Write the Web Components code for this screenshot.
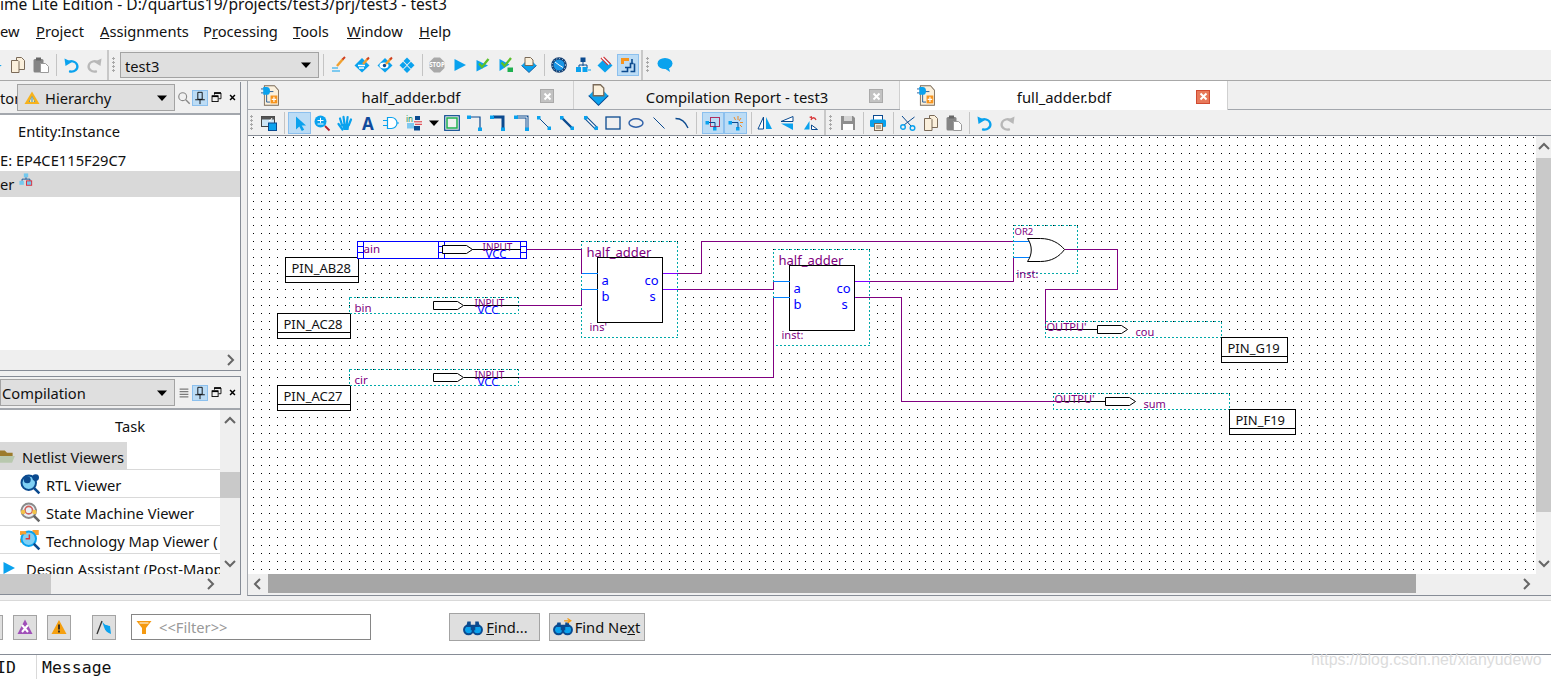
<!DOCTYPE html>
<html>
<head>
<meta charset="utf-8">
<title>Quartus</title>
<style>
    html, body { margin: 0; padding: 0; overflow: hidden; background: #fff; }
    body { font: 14.7px "Noto Sans", "Open Sans", sans-serif; color: #111; width: 1551px; height: 679px; }
</style>
</head>
<body>
<q-app>
    <q-title slot="title">ime Lite Edition - D:/quartus19/projects/test3/prj/test3 - test3</q-title>
    <q-menubar slot="menu">
        <q-menu w="36">ew</q-menu>
        <q-menu w="64"><u>P</u>roject</q-menu>
        <q-menu w="103"><u>A</u>ssignments</q-menu>
        <q-menu w="90">P<u>r</u>ocessing</q-menu>
        <q-menu w="54"><u>T</u>ools</q-menu>
        <q-menu w="72"><u>W</u>indow</q-menu>
        <q-menu w="50"><u>H</u>elp</q-menu>
    </q-menubar>
    <q-toolbar slot="tools" h="30">
        <q-tool w="7" icon="tick" s="7"></q-tool>
        <q-tool w="22" icon="copy"></q-tool>
        <q-tool w="23" icon="paste"></q-tool>
        <q-sep w="9"></q-sep>
        <q-tool w="21" icon="undo"></q-tool>
        <q-tool w="23" icon="redo"></q-tool>
        <q-grip w="15"></q-grip>
        <q-combo w="199" h="26">test3</q-combo>
        <q-sep w="8"></q-sep>
        <q-tool w="24" icon="pencil"></q-tool>
        <q-tool w="21" icon="dia-edit"></q-tool>
        <q-tool w="26" icon="dia-eye"></q-tool>
        <q-tool w="18" icon="dia-split"></q-tool>
        <q-sep w="12"></q-sep>
        <q-tool w="18" icon="stop"></q-tool>
        <q-tool w="27" icon="play"></q-tool>
        <q-tool w="20" icon="check"></q-tool>
        <q-tool w="26" icon="check-chip"></q-tool>
        <q-tool w="20" icon="dia-doc"></q-tool>
        <q-sep w="10"></q-sep>
        <q-tool w="20" icon="clock"></q-tool>
        <q-tool w="27" icon="hier"></q-tool>
        <q-tool w="18" icon="dia-red"></q-tool>
        <q-gap w="3"></q-gap>
        <q-tool w="22" icon="chip" active></q-tool>
        <q-grip w="16"></q-grip>
        <q-tool w="20" icon="bubble"></q-tool>
    </q-toolbar>

    <q-dock slot="left" title="tor" combo="Hierarchy" icon="hier-tri" tool="search" h="289">
        <q-panel>
            <q-row h="32" x="18">Entity:Instance</q-row>
            <q-row h="22" x="0" style="padding-top:2px">E: EP4CE115F29C7</q-row>
            <q-row h="26" x="0" selected>er&nbsp;<q-icon name="tree" s="14" style="align-self:flex-start;margin:2px 0 0 1px"></q-icon></q-row>
        </q-panel>
        <q-scroll slot="hbar" orient="h" arrows="end"></q-scroll>
    </q-dock>
    <q-gap slot="left" style="height:5px"></q-gap>
    <q-dock slot="left" title="" combo="Compilation" tool="lines" h="219" top>
        <q-task-list></q-task-list>
        <q-scroll slot="hbar" orient="h" arrows="end" thumb="51" offset="0" style="margin-right:20px"></q-scroll>
    </q-dock>

    <q-tabs slot="right">
        <q-tab icon="doc-chip" s="18" sh="21" pad="13" cm="19">half_adder.bdf</q-tab>
        <q-tab icon="dia-doc" s="21" sh="22" pad="14" cm="16" w="326">Compilation Report - test3</q-tab>
        <q-tab icon="doc-chip" s="18" sh="21" pad="17" cm="17" close="red" w="328" active>full_adder.bdf</q-tab>
    </q-tabs>
    <q-toolbar slot="right" h="25" flat>
        <q-grip w="10" plain></q-grip>
        <q-tool w="22" icon="win"></q-tool>
        <q-sep w="8"></q-sep>
        <q-tool w="23" icon="select" active></q-tool>
        <q-tool w="22" icon="zoom"></q-tool>
        <q-tool w="24" icon="hand"></q-tool>
        <q-tool w="22" icon="letter"></q-tool>
        <q-tool w="24" icon="gate"></q-tool>
        <q-tool w="22" icon="in"></q-tool>
        <q-tool w="17" icon="tri"></q-tool>
        <q-tool w="20" icon="rect-green"></q-tool>
        <q-tool w="26" icon="corner1"></q-tool>
        <q-tool w="20" icon="corner2"></q-tool>
        <q-tool w="28" icon="corner3"></q-tool>
        <q-tool w="16" icon="diag1"></q-tool>
        <q-tool w="30" icon="diag2"></q-tool>
        <q-tool w="17" icon="diag3"></q-tool>
        <q-tool w="28" icon="rect"></q-tool>
        <q-tool w="17" icon="ellipse"></q-tool>
        <q-tool w="29" icon="line"></q-tool>
        <q-tool w="17" icon="arc"></q-tool>
        <q-sep w="12"></q-sep>
        <q-tool w="22" icon="snap1" active></q-tool>
        <q-tool w="23" icon="snap2" active></q-tool>
        <q-sep w="8"></q-sep>
        <q-tool w="20" icon="flip-h"></q-tool>
        <q-tool w="25" icon="flip-v"></q-tool>
        <q-tool w="21" icon="rotate"></q-tool>
        <q-grip w="17" inset></q-grip>
        <q-tool w="20" icon="save"></q-tool>
        <q-sep w="10"></q-sep>
        <q-tool w="20" icon="print"></q-tool>
        <q-sep w="10"></q-sep>
        <q-tool w="19" icon="scissors"></q-tool>
        <q-tool w="28" icon="copy"></q-tool>
        <q-tool w="18" icon="paste"></q-tool>
        <q-sep w="12"></q-sep>
        <q-tool w="19" icon="undo"></q-tool>
        <q-tool w="26" icon="redo"></q-tool>
    </q-toolbar>
    <q-editor slot="right">
        <q-schematic></q-schematic>
        <q-scroll slot="vbar" orient="v" thumb="354" offset="0" arrows="both" w="15"></q-scroll>
        <q-scroll slot="hbar" orient="h" thumb="1148" offset="0" arrows="both" dark></q-scroll>
    </q-editor>

    <q-messages slot="bottom"></q-messages>
    <q-mark slot="mark">https://blog.csdn.net/xianyudewo</q-mark>
</q-app>

<script>
const BLUE = '#0aa2ee'
const NAVY = '#0b4a8f'
const CREAM = '#fbf0dc'
const BROWN = '#7a6a58'
const ROUND = 'fill="none" stroke-linecap="round"'
const base = `<path d="M8 1l7.5 7.5L8 15.5.5 8.5z" fill="${BLUE}"/>`
const lens = (c) => `<circle cx="7" cy="7" r="5.8" fill="#7fd0f5" stroke="${c}" stroke-width="1.6"/><path d="M11 11l4.500 4.500" stroke="${NAVY}" stroke-width="2"/>`
const pencil = `<path d="M9 7l5-5.500" stroke="#f0a030" stroke-width="2.500"/><path d="M13 2.500l2-2" stroke="#d04020" stroke-width="2"/>`
const ends = `<rect x="1" y="1" width="3.500" height="3.500" fill="${BLUE}"/><rect x="11.500" y="11.500" width="3.500" height="3.500" fill="${BLUE}"/>`
const corner = (inner) => `<path d="M3 2h10v11" fill="none" stroke="${NAVY}" stroke-width="${inner ? 3 : 1.200}"/>${inner === 2 ? '<path d="M3 2h10v11" fill="none" stroke="#fff"/>' : ''}<rect y=".5" width="4" height="3.500" fill="${BLUE}"/><rect x="11" y="12.500" width="4" height="3.500" fill="${BLUE}"/>`

// toolbar and tree icons, all drawn on a 16 x 16 box
const ICONS = {
    'tick': `<path d="M0 7h4l-4 3z" fill="${BLUE}"/>`,
    'copy': `<path d="M6.500 .5h5l3 3v9h-8z" fill="${CREAM}" stroke="${BROWN}"/><path d="M1.500 3.500h6.500l1 1v11h-7.500z" fill="${CREAM}" stroke="${BROWN}"/>`,
    'paste': `<rect x=".5" y="2" width="10" height="13.500" rx="1.500" fill="#858585"/><rect x="3" y=".5" width="5" height="3" fill="#666"/><path d="M7.500 6.500h5l3 3v6h-8z" fill="#fff" stroke="#9a9a9a"/>`,
    'undo': `<path d="M3.500 5.500a6 5.200 0 1 1 2.500 9" ${ROUND} stroke="${BLUE}" stroke-width="2.300"/><path d="M.5 1.500l1 7.500 6.500-4z" fill="${BLUE}"/>`,
    'redo': `<path d="M12.500 5.500a6 5.200 0 1 0-2.500 9" ${ROUND} stroke="#b8b8b8" stroke-width="2.300"/><path d="M15.500 1.500l-1 7.500-6.500-4z" fill="#b8b8b8"/>`,
    'pencil': `<path d="M1 11h6M1 14h8" stroke="${BLUE}" stroke-width="1.200"/><path d="M6 9l6-7" stroke="#f0a030" stroke-width="2.500"/><path d="M11.500 2.500L14 0" stroke="#d04020" stroke-width="2"/>`,
    'dia-edit': `${base}<path d="M4 8.500h7M5 11h5" stroke="#fff" stroke-width="1.300"/>${pencil}`,
    'dia-eye': `${base}<ellipse cx="7" cy="8.500" rx="4.500" ry="3" fill="#fff"/><circle cx="7.500" cy="8.500" r="1.700" fill="${NAVY}"/>${pencil}`,
    'dia-split': `<g fill="${BLUE}"><path d="M8 .5L11.500 4 8 7.500 4.500 4z"/><path d="M4 4.800L7.500 8.300 4 11.800.5 8.300z"/><path d="M12 4.800l3.500 3.500L12 11.800 8.500 8.300z"/><path d="M8 9L11.500 12.500 8 16 4.500 12.500z"/></g>`,
    'stop': `<path d="M5 .5h6L15.500 5v6L11 15.500H5L.5 11V5z" fill="#a9a9a9"/><text x="8" y="10.300" text-anchor="middle" font-size="6.200" font-weight="700" fill="#fff" font-family="Noto Sans">STOP</text>`,
    'play': `<path d="M2.500 2l11.500 6-11.500 6z" fill="${BLUE}"/>`,
    'check': `<path d="M1.500 3l11.500 5.500-11.500 6z" fill="${BLUE}"/><path d="M4 6.500l3 3.500 6.500-8" fill="none" stroke="#5cc02c" stroke-width="2.300"/>`,
    'check-chip': `<path d="M1.500 2l10 5.500-10 6.500z" fill="${BLUE}"/><path d="M3.500 5.500l3 3.500 6.500-8" fill="none" stroke="#5cc02c" stroke-width="2.300"/><rect x="9.500" y="10.500" width="5.500" height="4.500" fill="#1eb050"/>`,
    'dia-doc': `<path d="M.5 8.500L4 5v3.500h8V5l3.500 3.500L8 15.500z" fill="${BLUE}"/><path d="M.5 8.500L8 15.500 15.500 8.500" fill="none" stroke="${NAVY}" stroke-width=".8"/><path d="M4 .5h5.500l2.500 2.500v5.500H4z" fill="${CREAM}" stroke="${BROWN}"/>`,
    'clock': `<circle cx="8" cy="8" r="7.800" fill="#123f73"/><circle cx="8" cy="8" r="6.500" fill="none" stroke="#fff" stroke-width=".8" stroke-dasharray="1 2"/><circle cx="8" cy="8" r="5.500" fill="#1a96e6"/><path d="M8 8L4 5M8 8l4 2.500" stroke="#fff"/>`,
    'hier': `<rect x="5.500" y=".5" width="5" height="4.500" fill="${NAVY}"/><path d="M8 5v4M4 11V8h8v3" fill="none" stroke="${NAVY}"/><rect x="1" y="10" width="5" height="5" fill="${BLUE}"/><rect x="7.500" y="10" width="5" height="5" fill="${BLUE}"/><path d="M13 13h3" stroke="${BLUE}"/>`,
    'dia-red': `${base}<path d="M4 1l7 7M6.500 0l7 7" stroke="#d8383a" stroke-width="1.400"/><path d="M5.200 .5l7 7" stroke="#fff" stroke-width="1.200"/>`,
    'chip': `<path d="M1 1h8v3H4v3H1z" fill="#f7941d"/><path d="M1.500 14.500h6v-4h3v-4h3M5 10.500h2.500M12 2v4.500M14.500 6.500v8h-4" fill="none" stroke="${NAVY}" stroke-width="1.600"/>`,
    'bubble': `<ellipse cx="8" cy="6.500" rx="7.500" ry="5.500" fill="${BLUE}"/><path d="M7 11l6 4-1.500-6z" fill="${BLUE}"/>`,
    'win': `<rect x=".5" y="1.500" width="13" height="10" fill="#cfe6f5" stroke="#444"/><rect x=".5" y="1.500" width="13" height="3" fill="#555"/><path d="M8 5.500h1.500L11 3" stroke="#fff" fill="none"/><rect x="7.500" y="8" width="8" height="7.500" fill="${BLUE}" stroke="${NAVY}"/>`,
    'select': `<path d="M4 1.500v13l3.300-3 2.500 4.500 2.400-1.200-2.500-4.300h4.300z" fill="${BLUE}"/>`,
    'zoom': `<circle cx="6.500" cy="6.500" r="6" fill="${BLUE}"/><path d="M3.500 5.500h6M6.500 2.800v5M3.500 9h6" stroke="#fff"/><path d="M11 11l4.500 4.500" stroke="#b02030" stroke-width="1.800"/>`,
    'hand': `<path d="M5.500 14.500L1.500 9M5 10L3 3.500M7.500 9L6.500 1.800M9.800 9l.8-7M11.800 10l2.200-5.500" ${ROUND} stroke="${BLUE}" stroke-width="2.200"/><path d="M4.500 9h8l-1 6h-5z" fill="${BLUE}"/>`,
    'letter': `<text x="8" y="14.500" text-anchor="middle" font-size="17" font-weight="700" fill="#0f4a9c" font-family="Noto Sans">A</text>`,
    'gate': `<path d="M4.500 2.500h4a5.500 5.500 0 0 1 0 11h-4z" fill="#fff" stroke="${BLUE}" stroke-width="1.200"/><path d="M0 5.500h4.500M0 10.500h4.500M14 8h2" stroke="${BLUE}" stroke-width="1.200"/>`,
    'in': `<text x="0" y="6.500" font-size="8" fill="#128a50" font-family="Noto Sans">in</text><rect x="9" y="1" width="5" height="4" fill="${NAVY}"/><rect x="8" y="11" width="6" height="4.500" fill="${NAVY}"/><path d="M8 6.800h8M9 9.300h7" stroke="#e0303a"/><rect x="1" y="8" width="7" height="5.500" fill="#7fc8f0"/>`,
    'tri': `<path d="M3 5.500h10L8 11z" fill="#000"/>`,
    'rect-green': `<rect x=".7" y=".7" width="14.600" height="14.600" fill="none" stroke="${NAVY}" stroke-width="1.200"/><rect x="3" y="3" width="10" height="10" fill="none" stroke="#1eb050" stroke-width="1.500"/>`,
    'corner1': corner(0),
    'corner2': corner(1),
    'corner3': corner(2),
    'diag1': `<path d="M2 2l12 12" stroke="${NAVY}"/>${ends}`,
    'diag2': `<path d="M2 2l12 12" stroke="${NAVY}" stroke-width="2.400"/>${ends}`,
    'diag3': `<path d="M2 2l12 12" stroke="${NAVY}" stroke-width="3.600"/><path d="M2 2l12 12" stroke="#fff" stroke-width="1.400"/>${ends}`,
    'rect': `<rect x="1" y="2" width="14" height="12" fill="none" stroke="${NAVY}" stroke-width="1.300"/>`,
    'ellipse': `<ellipse cx="8" cy="8" rx="7" ry="4.200" fill="none" stroke="#2d5fa8" stroke-width="1.400"/>`,
    'line': `<path d="M2.500 2.500l11 11" stroke="${NAVY}"/>`,
    'arc': `<path d="M1.500 3.500c6 0 10 3.500 12.500 9.500" fill="none" stroke="${NAVY}" stroke-width="1.300"/>`,
    'snap1': `<rect x="5.500" y="2.500" width="9" height="9" fill="none" stroke="#b03060"/><rect x=".5" y="6" width="3.500" height="3.500" fill="${BLUE}"/><rect x="8" y="12" width="3.500" height="3.500" fill="${BLUE}"/><path d="M4 7.500h6v5" stroke="${NAVY}" fill="none"/>`,
    'snap2': `<rect x=".5" y="6" width="3.500" height="3.500" fill="${BLUE}"/><rect x="8" y="12" width="3.500" height="3.500" fill="${BLUE}"/><path d="M4 7.500h6v5" stroke="${NAVY}" fill="none"/><path d="M10 1v4M13 3l-2 3M15 7.500h-3M14 12l-2-2M6 2l1.500 3" stroke="#f08a24"/>`,
    'flip-h': `<path d="M6.500 2v12H1z" fill="#fff" stroke="${NAVY}"/><path d="M9 2v12h6z" fill="${BLUE}"/>`,
    'flip-v': `<path d="M13 1.500v5H1z" fill="#fff" stroke="${NAVY}"/><path d="M13 8.500v6.500L1 8.500z" fill="${BLUE}"/>`,
    'rotate': `<path d="M1 14.500L6.500 6v8.500z" fill="${BLUE}"/><path d="M8.500 10l6 4.500h-6z" fill="#fff" stroke="${NAVY}"/><path d="M8 5c1-3 4-3 5 0" fill="none" stroke="#d8383a" stroke-width="1.300"/><path d="M6 2l3-1 0 3z" fill="#d8383a"/>`,
    'save': `<path d="M1 1h12l2 2v12H1z" fill="#8e8e8e"/><rect x="4" y="1" width="8" height="5" fill="#d4d4d4"/><rect x="3" y="9" width="10" height="6" fill="#fff"/>`,
    'print': `<rect x="3.500" y=".5" width="9" height="5" fill="#fff" stroke="${NAVY}"/><rect x="0" y="4.500" width="16" height="7.500" rx="1.500" fill="${BLUE}"/><rect x="4.500" y="8.500" width="8" height="7" fill="${CREAM}" stroke="${BROWN}"/><path d="M6 11h5M6 13h5" stroke="${BROWN}"/>`,
    'scissors': `<path d="M2 1l9 10M14.500 2L4 10" fill="none" stroke="${NAVY}"/><circle cx="3" cy="12" r="2.300" fill="none" stroke="${BLUE}" stroke-width="1.400"/><circle cx="12.500" cy="13" r="2.300" fill="none" stroke="${BLUE}" stroke-width="1.400"/>`,
    'doc-chip': `<path d="M3 .5h9l3.500 3.500v11.500H3z" fill="${CREAM}" stroke="${BROWN}" stroke-width=".8"/><path d="M0 3h3M0 6h3M6 5h5M5 7v6h3" stroke="${NAVY}" stroke-width=".7" fill="none"/><path d="M2 1.500h3a3 3 0 0 1 0 6H2z" fill="${BLUE}"/><rect x="8.500" y="8" width="6" height="6" fill="#f7941d"/><path d="M11.500 9v4M9.500 11h4" stroke="#fff"/>`,
    'hier-tri': `<path d="M8 1.500L15.500 14H.5z" fill="#f6b21c"/><path d="M8 6l3 6H5z" fill="#2a8fe0"/><path d="M6.500 12V9.500M8 12V7.500M9.500 12V9.500" stroke="#fde9a0"/>`,
    'tree': `<rect x="5.500" y=".5" width="5" height="4.500" fill="#72c8ee"/><path d="M8 5v2M3.500 9V7h9v2" fill="none" stroke="${NAVY}"/><rect x=".5" y="9" width="5" height="4.500" fill="#72c8ee"/><rect x="8.500" y="9" width="6" height="5" fill="#72c8ee" stroke="#e02030"/>`,
    'search': `<circle cx="6.500" cy="6.500" r="4.500" fill="none" stroke="#888" stroke-width="1.300"/><path d="M10 10l4.500 4.500" stroke="#888" stroke-width="1.600"/>`,
    'lines': `<path d="M3 3.500h10M3 6.500h10M3 9.500h10M3 12.500h10" stroke="#7a7a7a" stroke-width="1.300"/>`,
    'pin': `<path d="M5.500 1.500h5v8h-5zM2.500 10h11M8 10v5" fill="none" stroke="#000"/>`,
    'restore': `<path d="M5.500 2.500h8v7h-3M5.500 2.500v2" fill="none" stroke="#000" stroke-width="1.100"/><path d="M5 2.500h8.500" stroke="#000" stroke-width="2"/><rect x="2.500" y="6" width="7.500" height="7" fill="none" stroke="#000" stroke-width="1.100"/><path d="M2.500 6.500H10" stroke="#000" stroke-width="2"/>`,
    'close': `<path d="M5 5l6 6M11 5l-6 6" stroke="#000" stroke-width="1.800"/>`,
    'folder': `<path d="M0 3h6l2 2h5v3H0z" fill="#9c7c2c"/><path d="M2 8h13l-2.500 6H0z" fill="#b8c8ae"/>`,
    'rtl': `${lens(NAVY)}<circle cx="12.500" cy="2.800" r="2.700" fill="${NAVY}"/><circle cx="5.800" cy="4.500" r="2.800" fill="${NAVY}"/>`,
    'state': `<circle cx="7" cy="7" r="5.800" fill="#e8f0f5" stroke="#8a8a8a" stroke-width="1.600"/><circle cx="7" cy="6.500" r="3" fill="none" stroke="#d0605a" stroke-width="1.300"/><circle cx="2.500" cy="8" r="1.800" fill="#f2c44a"/><circle cx="11.500" cy="8" r="1.800" fill="#f2c44a"/><path d="M11 11l4.500 4.500" stroke="#666" stroke-width="2"/>`,
    'tech': `<path d="M0 1h5v3H0zM10 0h5v4h-5zM0 7h3v3H0z" fill="#f7a030"/>${lens(BLUE)}<path d="M4.500 7h3V3.500" fill="none" stroke="#d8383a" stroke-width="1.200"/><path d="M0 1h5v2.500H0z" fill="#f7a030"/>`,
    'err': `<path d="M8 .5l7.500 14.500H.5z" fill="#a050b8"/><path d="M5 6l6 7M11 6l-6 7" stroke="#fff" stroke-width="2"/>`,
    'warn': `<path d="M8 1l7.500 14H.5z" fill="#f5a010"/><path d="M8 5.500v5M8 11.500v2" stroke="#222" stroke-width="1.700"/>`,
    'flag': `<path d="M1 15L6 2" stroke="#333" stroke-width="1.300"/><path d="M6 2c2 4 4 4 8 5l1 8c-3-1-6-3-7-7z" fill="${BLUE}"/>`,
    'funnel': `<path d="M.5 2h15L10 9v6H6V9z" fill="#f59a10"/><path d="M3.500 4h9" stroke="#fff"/>`,
    'find': `<circle cx="4" cy="10.500" r="4" fill="${BLUE}" stroke="${NAVY}" stroke-width="1.700"/><circle cx="12" cy="10.500" r="4" fill="${BLUE}" stroke="${NAVY}" stroke-width="1.700"/><path d="M2 8l1-5h3v5M14 8l-1-5h-3v5" fill="${NAVY}"/><rect x="6" y="6" width="4" height="5" fill="${NAVY}"/>`,
    'find-next': `<circle cx="4" cy="10.500" r="4" fill="${BLUE}" stroke="${NAVY}" stroke-width="1.700"/><circle cx="12" cy="10.500" r="4" fill="${BLUE}" stroke="${NAVY}" stroke-width="1.700"/><path d="M2 8l1-4h3v4M14 8l-1-4h-3v4" fill="${NAVY}"/><rect x="6" y="6" width="4" height="5" fill="${NAVY}"/><path d="M9 2.500h5M12 .5l3 2-3 2" fill="none" stroke="#f59a10"/>`
}

class QElement extends HTMLElement {
    constructor(){
        super()
        this.attachShadow({mode: 'open'})
    }
    getStyles(){ return ':host { display: block; }' }
    getTemplate(){ return '<slot></slot>' }
    render(){
        this.shadowRoot.innerHTML = `<style>${this.getStyles()}</style>${this.getTemplate()}`
    }
    connectedCallback(){
        const w = this.getAttribute('w')
        if (w) this.style.width = w + 'px'
        this.render()
    }
}

class QIcon extends QElement {
    getStyles(){
        return `:host { display: inline-flex; flex: none; } svg { display: block; overflow: visible; }`
    }
    getTemplate(){
        const s = this.getAttribute('s') || 16
        const h = this.getAttribute('sh') || s
        return `<svg width="${s}" height="${h}" viewBox="0 0 16 16" preserveAspectRatio="none">${ICONS[this.getAttribute('name')]}</svg>`
    }
}

class QApp extends QElement {
    getStyles(){
        return `
            :host { display: grid; width: 1551px; height: 679px; overflow: hidden; position: relative;
                grid-template-rows: 14px 36px 31px 519px 79px; background: #fff; }
            .main { display: flex; background: #f0f0f0; }
            .left { width: 241px; flex: none; padding-top: 1px; display: flex; flex-direction: column; box-sizing: border-box; }
            .right { margin-left: 6px; flex: 1; min-width: 0; height: 514px; display: flex; flex-direction: column;
                border-left: 1px solid #a3a7ad; border-bottom: 1px solid #868c96; }
            .mark { position: absolute; left: 1311px; top: 651px; }
        `
    }
    getTemplate(){
        return `
            <slot name="title"></slot>
            <slot name="menu"></slot>
            <slot name="tools"></slot>
            <div class="main">
                <div class="left"><slot name="left"></slot></div>
                <div class="right"><slot name="right"></slot></div>
            </div>
            <slot name="bottom"></slot>
            <div class="mark"><slot name="mark"></slot></div>
        `
    }
}

class QTitle extends QElement {
    getStyles(){
        return `:host { overflow: hidden; height: 14px; white-space: nowrap; background: #fff; font-size: 15.6px; }
            span { display: block; margin-top: -3px; line-height: 14px; }`
    }
    getTemplate(){ return '<span><slot></slot></span>' }
}

class QMenubar extends QElement {
    getStyles(){ return `:host { display: flex; height: 34px; padding-bottom: 2px; align-items: center; background: #fff; }` }
}

class QMenu extends QElement {
    getStyles(){ return `:host { display: block; white-space: nowrap; flex: none; }` }
}

class QToolbar extends QElement {
    getStyles(){
        const h = this.getAttribute('h')
        return `:host { display: flex; align-items: center; height: ${h}px; box-sizing: content-box; background: #f0f0f0; overflow: hidden;
            ${this.hasAttribute('flat') ? '' : 'border-bottom: 1px solid #a8a8a8;'} }`
    }
}

class QTool extends QElement {
    getStyles(){
        return `:host { display: flex; flex: none; height: 22px; align-items: center; justify-content: center; box-sizing: border-box; }
            :host([active]) { background: #bcdcf5; border: 1px solid #8cc0ee; }`
    }
    getTemplate(){ return `<q-icon name="${this.getAttribute('icon')}" s="${this.getAttribute('s') || 16}"></q-icon>` }
}

class QGap extends QElement {
    getStyles(){ return `:host { display: block; flex: none; }` }
    getTemplate(){ return '' }
}

class QSep extends QElement {
    getStyles(){
        return `:host { display: flex; flex: none; height: 22px; justify-content: center; }
            i { width: 1px; background: #c4c4c4; }`
    }
    getTemplate(){ return '<i></i>' }
}

// toolbar divider with its dotted handle
class QGrip extends QElement {
    getStyles(){
        const plain = this.hasAttribute('plain')
        const inset = this.hasAttribute('inset')
        return `:host { display: flex; flex: none; height: 100%; align-self: stretch; align-items: center; gap: 3px; box-sizing: border-box;
                padding-left: ${plain ? 2 : inset ? 3 : 2}px; }
            i { width: 2px; align-self: stretch; background: #c8c8c8; ${plain ? 'display: none;' : ''} }
            b { width: 3px; height: 16px; background: radial-gradient(circle at 1.500px 1.500px, #a8a8a8 1.100px, transparent 1.200px) 0 0 / 3px 4px; }`
    }
    getTemplate(){ return '<i></i><b></b>' }
}

class QCombo extends QElement {
    getStyles(){
        return `:host { display: flex; flex: none; height: ${this.getAttribute('h') || 27}px; align-items: center; box-sizing: border-box; overflow: hidden;
                padding: 0 4px; background: #dfdfdf; border: 1px solid #a3a3a3; white-space: nowrap; }
            .t { flex: 1; padding-top: ${this.hasAttribute('h') ? 2 : 0}px; }`
    }
    getTemplate(){ return `<span class="t"><slot></slot></span><q-icon name="tri" s="16"></q-icon>` }
}

// dock panel: title + combo + little tool buttons, then the body
class QDock extends QElement {
    getStyles(){
        const top = this.hasAttribute('top')
        return `:host { display: flex; flex-direction: column; flex: none; box-sizing: border-box; height: ${this.getAttribute('h')}px;
                border-right: 1px solid #868c96; border-bottom: 1px solid #868c96; ${top ? 'border-top: 1px solid #868c96;' : ''} }
            .head { display: flex; padding-top: 2px; border-bottom: 2px solid #a3a7ad; height: 29px; white-space: nowrap; background: #f0f0f0; }
            .label { width: ${top ? 0 : 17}px; flex: none; line-height: 29px; overflow: hidden; }
            .combo { width: ${top ? 175 : 158}px; flex: none; margin-right: 1px; }
            .combo span { display: inline-flex; align-items: center; gap: 5px; margin: ${top ? 0 : 2}px 0 0 ${top ? -3 : 2}px; }
            .btns { display: flex; align-items: center; height: 27px; }
            .btn { display: flex; width: 16px; height: 16px; align-items: center; justify-content: center; }
            .pin { background: #bcdcf5; box-shadow: inset 0 0 0 1px #8cc0ee; }
            .body { flex: 1; min-height: 0; overflow: hidden; background: #efefef; display: flex; flex-direction: column; }
            .main { flex: 1; min-height: 0; overflow: hidden; background: #fff; }`
    }
    getTemplate(){
        const icon = this.getAttribute('icon')
        return `
            <div class="head">
                <div class="label">${this.getAttribute('title')}</div>
                <q-combo class="combo"><span>${icon ? `<q-icon name="${icon}" s="16"></q-icon>` : ''}${this.getAttribute('combo')}</span></q-combo>
                <div class="btns">
                    <div class="btn"><q-icon name="${this.getAttribute('tool')}" s="14"></q-icon></div>
                    <div class="btn pin"><q-icon name="pin" s="14"></q-icon></div>
                    <div class="btn"><q-icon name="restore" s="13"></q-icon></div>
                    <div class="btn"><q-icon name="close" s="13"></q-icon></div>
                </div>
            </div>
            <div class="body">
                <div class="main"><slot></slot></div>
                <slot name="hbar"></slot>
            </div>
        `
    }
}

class QPanel extends QElement {
    getStyles(){ return `:host { display: block; white-space: nowrap; }` }
}

class QRow extends QElement {
    getStyles(){
        return `:host { display: flex; align-items: center; height: ${this.getAttribute('h')}px; padding-left: ${this.getAttribute('x')}px; white-space: nowrap; overflow: hidden; }
            :host([selected]) { background: #d9d9d9; }`
    }
}

class QScroll extends QElement {
    getStyles(){
        const v = this.getAttribute('orient') === 'v'
        const size = this.getAttribute('w') || 20
        const thumb = this.getAttribute('thumb')
        const dark = this.hasAttribute('dark')
        return `:host { display: flex; flex: none; background: #efefef; box-sizing: border-box;
                ${v ? `flex-direction: column; width: ${size}px; height: 100%;` : `height: ${dark ? 19 : 20}px;`} }
            .a { display: flex; align-items: center; justify-content: center; flex: none; ${v ? `height: 22px;` : `width: 20px;`} }
            .track { flex: 1; min-width: 0; min-height: 0; }
            .thumb { background: ${dark ? '#a6a6a6' : '#c9c9c9'};
                ${v ? `height: ${thumb}px; margin-top: ${this.getAttribute('offset') || 0}px;` : `width: ${thumb}px; height: 100%; margin-left: ${this.getAttribute('offset') || 0}px;`} }
            svg { display: block; }`
    }
    arrow(d){
        return `<div class="a"><svg width="12" height="12" viewBox="0 0 12 12"><path d="${d}" fill="none" stroke="#666" stroke-width="2"/></svg></div>`
    }
    getTemplate(){
        const v = this.getAttribute('orient') === 'v'
        const both = this.getAttribute('arrows') === 'both'
        const first = v ? this.arrow('M1 8l5-5 5 5') : this.arrow('M8 1L3 6l5 5')
        const last = v ? this.arrow('M1 4l5 5 5-5') : this.arrow('M4 1l5 5-5 5')
        const thumb = this.getAttribute('thumb') ? '<div class="thumb"></div>' : ''
        return `${both ? first : ''}<div class="track">${thumb}</div>${last}`
    }
}

class QTaskRow extends QElement {
    getStyles(){
        return `:host { display: flex; align-items: center; height: 28px; box-sizing: border-box; white-space: nowrap; border-bottom: 1px solid #d9d9d9;
                padding-left: ${this.getAttribute('x') || 20}px; gap: ${this.getAttribute('gap') || 6}px; overflow: hidden; }
            .t { padding-top: 2px; }`
    }
    getTemplate(){
        const i = this.getAttribute('icon')
        return `<q-icon name="${i}" s="${this.getAttribute('s') || 20}"></q-icon><span class="t"><slot></slot></span>`
    }
}

class QTaskList extends QElement {
    getStyles(){
        return `:host { display: flex; height: 100%; }
            .list { width: 220px; flex: none; overflow: hidden; white-space: nowrap; }
            .head { height: 32px; line-height: 32px; text-align: center; padding-left: 40px; box-sizing: border-box; }
            .net { display: flex; align-items: center; gap: 6px; width: 127px; height: 27px; background: #d9d9d9; }
            .net span { padding-top: 2px; }
            .line { border-bottom: 1px solid #d9d9d9; }
            .fold { margin-left: -2px; }`
    }
    getTemplate(){
        return `
            <div class="list">
                <div class="head">Task</div>
                <div class="line"><div class="net"><q-icon class="fold" name="folder" s="18"></q-icon><span>Netlist Viewers</span></div></div>
                <q-task-row icon="rtl">RTL Viewer</q-task-row>
                <q-task-row icon="state">State Machine Viewer</q-task-row>
                <q-task-row icon="tech">Technology Map Viewer (</q-task-row>
                <q-task-row icon="play" x="1" s="16" gap="9">Design Assistant (Post-Mapping)</q-task-row>
            </div>
            <q-scroll orient="v" arrows="both" thumb="26" offset="40"></q-scroll>
        `
    }
}

class QTabs extends QElement {
    getStyles(){ return `:host { display: flex; height: 28px; border-bottom: 1px solid #a3a7ad; background: #f0f0f0; flex: none; }` }
}

class QTab extends QElement {
    getStyles(){
        return `:host { display: grid; grid-template-columns: 1fr auto 1fr; align-items: center; flex: none; width: 326px; height: 28px; box-sizing: border-box;
                border-right: 1px solid #d0d0d0; white-space: nowrap; font-size: 14.8px; }
            :host([active]) { background: #fff; height: 29px; }
            .i { padding-left: ${this.getAttribute('pad')}px; display: flex; }
            .t { padding: 3px 0 0 1px; }
            .c { justify-self: end; margin: 2px ${this.getAttribute('cm')}px 0 0; width: 14px; height: 14px; box-sizing: border-box; display: flex; align-items: center; justify-content: center; }
            .grey { background: #c2c2c2; border: 1px solid #aaa; }
            .red { background: #e8795a; border: 1px solid #d04a30; }
            svg { display: block; }`
    }
    getTemplate(){
        const close = this.getAttribute('close') || 'grey'
        return `
            <div class="i"><q-icon name="${this.getAttribute('icon')}" s="${this.getAttribute('s')}" sh="${this.getAttribute('sh')}"></q-icon></div>
            <div class="t"><slot></slot></div>
            <div class="c ${close}"><svg width="9" height="9" viewBox="0 0 9 9"><path d="M1.500 1.500l6 6M7.500 1.500l-6 6" stroke="#fff" stroke-width="2"/></svg></div>
        `
    }
}

class QEditor extends QElement {
    getStyles(){
        return `:host { display: grid; grid-template-columns: 1fr 15px; grid-template-rows: 438px 19px; flex: none; border-top: 1px solid #868c96; background: #efefef; }
            .c { grid-column: 1; grid-row: 1; min-width: 0; overflow: hidden; background: #fff; }
            .v { grid-column: 2; grid-row: 1; }
            .h { grid-column: 1; grid-row: 2; }`
    }
    getTemplate(){
        return `
            <div class="c"><slot></slot></div>
            <div class="v"><slot name="vbar"></slot></div>
            <div class="h"><slot name="hbar"></slot></div>
        `
    }
}

// the block diagram itself, drawn in the page's coordinates
class QSchematic extends QElement {
    getStyles(){
        return `:host { display: block; width: 1288px; height: 438px; }
            svg { display: block; font-family: "Noto Sans", sans-serif; }`
    }
    wire(points, color = '#800080'){
        return `<polyline points="${points}" fill="none" stroke="${color}" shape-rendering="crispEdges"/>`
    }
    label(x, y, text, size, color = '#800080'){
        return `<text x="${x}" y="${y}" font-size="${size}" fill="${color}">${text}</text>`
    }
    dotted(x, y, w, h){
        return `<rect x="${x}" y="${y}" width="${w}" height="${h}" fill="#fff" stroke="#00a8a8" stroke-dasharray="2 2" shape-rendering="crispEdges"/>`
    }
    pinName(x, y, text, w = 73){
        return `<rect x="${x}" y="${y}" width="${w}" height="25" fill="#fff" stroke="#000" shape-rendering="crispEdges"/>
            <path d="M${x} ${y + 19}h${w}" stroke="#000" shape-rendering="crispEdges"/>
            ${this.label(x + 6, y + 15, text, 13, '#111')}`
    }
    pinShape(x, y, len = 24){
        return `<path d="M${x} ${y - 4}h${len}l6 4-6 4h-${len}z" fill="#fff" stroke="#000" stroke-width="1"/>`
    }
    inputPin(y, name){
        return this.dotted(349, y - 8, 169, 16)
            + this.wire(`463,${y} 518,${y}`, '#000')
            + this.pinShape(433, y)
            + this.label(474, y + 1, 'INPUT', 10)
            + this.label(477, y + 8, 'VCC', 11.500, '#0000ff')
            + this.label(354, y + 6, name, 11.500)
    }
    block(x, y, label, inst){
        return this.dotted(x - 16, y - 16, 96, 96)
            + `<rect x="${x}" y="${y}" width="65" height="65" fill="#fff" stroke="#000" shape-rendering="crispEdges"/>`
            + this.wire(`${x - 16},${y + 16} ${x},${y + 16}`, '#0080ff')
            + this.wire(`${x - 16},${y + 32} ${x},${y + 32}`, '#0080ff')
            + this.wire(`${x + 65},${y + 16} ${x + 80},${y + 16}`, '#8000ff')
            + this.wire(`${x + 65},${y + 32} ${x + 80},${y + 32}`, '#8000ff')
            + this.label(x - 11, y - 1, label, 13)
            + this.label(x + 4, y + 27, 'a', 13, '#0000ff')
            + this.label(x + 4, y + 43, 'b', 13, '#0000ff')
            + this.label(x + 47, y + 27, 'co', 13, '#0000ff')
            + this.label(x + 52, y + 43, 's', 13, '#0000ff')
            + this.label(x - 8, y + 73, inst, 11)
    }
    outputPin(x, y, name){
        return this.dotted(x, y - 8, 176, 16)
            + this.wire(`${x},${y} ${x + 52},${y}`, '#000')
            + this.pinShape(x + 52, y)
            + this.label(x + 1, y + 1, 'OUTPU\'', 11)
            + this.label(x + 90, y + 6, name, 11)
    }
    getTemplate(){
        const sel = 'fill="none" stroke="#0000ff" shape-rendering="crispEdges"'
        return `
            <svg width="1288" height="438" viewBox="248 136 1288 438">
                <defs>
                    <pattern id="grid" x="5" y="1" width="8" height="8" patternUnits="userSpaceOnUse">
                        <rect width="1" height="1" fill="#000"></rect>
                    </pattern>
                </defs>
                <rect x="248" y="136" width="1288" height="438" fill="url(#grid)" shape-rendering="crispEdges"></rect>
                <g transform="translate(.5 .5)">
                    ${this.pinName(285, 257, 'PIN_AB28')}
                    ${this.pinName(277, 313, 'PIN_AC28')}
                    ${this.pinName(277, 385, 'PIN_AC27')}
                    ${this.block(597, 257, 'half_adder', 'ins\'')}
                    ${this.block(789, 265, 'half_adder', 'inst:')}
                    ${this.wire('526,249 581,249 581,273')}
                    ${this.wire('518,305 581,305 581,289')}
                    ${this.wire('518,377 773,377 773,297')}
                    ${this.wire('677,273 701,273 701,241 1013,241')}
                    ${this.wire('677,289 773,289 773,281')}
                    ${this.inputPin(305, 'bin')}
                    ${this.inputPin(377, 'cir')}

                    <rect x="357" y="241" width="169" height="17" fill="#fff" stroke="#0000ff" shape-rendering="crispEdges"/>
                    <path d="M363 241v17M438 241v17M444 241v17M520 241v17M357 246h6v6h-6M520 246h6v6h-6M438 246h6v6h-6" ${sel}/>
                    ${this.wire('470,249 520,249', '#000')}
                    ${this.pinShape(442, 249)}
                    ${this.label(482, 250, 'INPUT', 10)}
                    ${this.label(485, 257, 'VCC', 11.500, '#0000ff')}
                    ${this.label(363, 252, 'ain', 11.500)}

                    ${this.dotted(1013, 225, 64, 48)}
                    ${this.wire('1013,241 1030,241', '#0080ff')}
                    ${this.wire('1013,257 1030,257', '#0080ff')}
                    <path d="M1027 238H1040C1051 238 1059 243 1064 249C1059 256 1051 261 1040 261H1027C1032 254 1032 245 1027 238z" fill="#fff" stroke="#000"/>
                    ${this.label(1014, 234, 'OR2', 9.500)}
                    ${this.label(1016, 277, 'inst:', 11)}
                    ${this.wire('869,281 1013,281 1013,257')}
                    ${this.wire('855,281 869,281', '#8000ff')}
                    ${this.wire('1064,249 1117,249 1117,289 1045,289 1045,329')}

                    ${this.outputPin(1045, 329, 'cou')}
                    ${this.outputPin(1053, 401, 'sum')}
                    ${this.wire('855,297 901,297 901,401 1061,401')}
                    ${this.pinName(1221, 337, 'PIN_G19', 66)}
                    ${this.pinName(1229, 409, 'PIN_F19', 66)}
                </g>
            </svg>
        `
    }
}

class QMessages extends QElement {
    getStyles(){
        return `:host { display: block; height: 79px; border-top: 1px solid #d9d9d9; box-sizing: border-box; background: #fff; overflow: hidden; }
            .bar { display: flex; align-items: center; box-sizing: content-box; height: 52px; padding-bottom: 1px; border-bottom: 1px solid #868c96; }
            .b { display: flex; align-items: center; justify-content: center; flex: none; height: 25px; box-sizing: border-box;
                background: #dfdfdf; border: 1px solid #a3a3a3; }
            .filter { display: flex; align-items: center; gap: 7px; flex: none; width: 240px; height: 26px; box-sizing: border-box; padding-left: 4px;
                border: 1px solid #868686; color: #999; margin-left: 15px; }
            .find { height: 28px; gap: 4px; white-space: nowrap; }
            .head { display: flex; height: 25px; font: 16.5px "DejaVu Sans Mono", monospace; line-height: 25px; color: #111; }
            .id { width: 37px; border-right: 1px solid #d9d9d9; box-sizing: border-box; text-indent: -4px; overflow: hidden; }
            .msg { padding-left: 5px; }`
    }
    getTemplate(){
        return `
            <div class="bar">
                <div class="b" style="width:24px;margin-left:-21px"></div>
                <div class="b" style="width:24px;margin-left:10px"><q-icon name="err" s="16"></q-icon></div>
                <div class="b" style="width:24px;margin-left:10px"><q-icon name="warn" s="16"></q-icon></div>
                <div class="b" style="width:24px;margin-left:21px"><q-icon name="flag" s="16"></q-icon></div>
                <div class="filter"><q-icon name="funnel" s="16"></q-icon>&lt;&lt;Filter&gt;&gt;</div>
                <div class="b find" style="width:91px;margin-left:78px;padding-left:3px"><q-icon name="find" s="18"></q-icon><span><u>F</u>ind...</span></div>
                <div class="b find" style="width:96px;margin-left:9px;gap:3px"><q-icon name="find-next" s="18"></q-icon><span>Find Ne<u>x</u>t</span></div>
            </div>
            <div class="head"><div class="id">ID</div><div class="msg">Message</div></div>
        `
    }
}

class QMark extends QElement {
    getStyles(){
        return `:host { display: block; font: 15.9px "Liberation Sans", sans-serif; color: #dcdcdc; white-space: nowrap; }`
    }
}

customElements.define('q-icon', QIcon)
customElements.define('q-app', QApp)
customElements.define('q-title', QTitle)
customElements.define('q-menubar', QMenubar)
customElements.define('q-menu', QMenu)
customElements.define('q-toolbar', QToolbar)
customElements.define('q-tool', QTool)
customElements.define('q-gap', QGap)
customElements.define('q-sep', QSep)
customElements.define('q-grip', QGrip)
customElements.define('q-combo', QCombo)
customElements.define('q-dock', QDock)
customElements.define('q-panel', QPanel)
customElements.define('q-row', QRow)
customElements.define('q-scroll', QScroll)
customElements.define('q-task-row', QTaskRow)
customElements.define('q-task-list', QTaskList)
customElements.define('q-tabs', QTabs)
customElements.define('q-tab', QTab)
customElements.define('q-editor', QEditor)
customElements.define('q-schematic', QSchematic)
customElements.define('q-messages', QMessages)
customElements.define('q-mark', QMark)
</script>
</body>
</html>
